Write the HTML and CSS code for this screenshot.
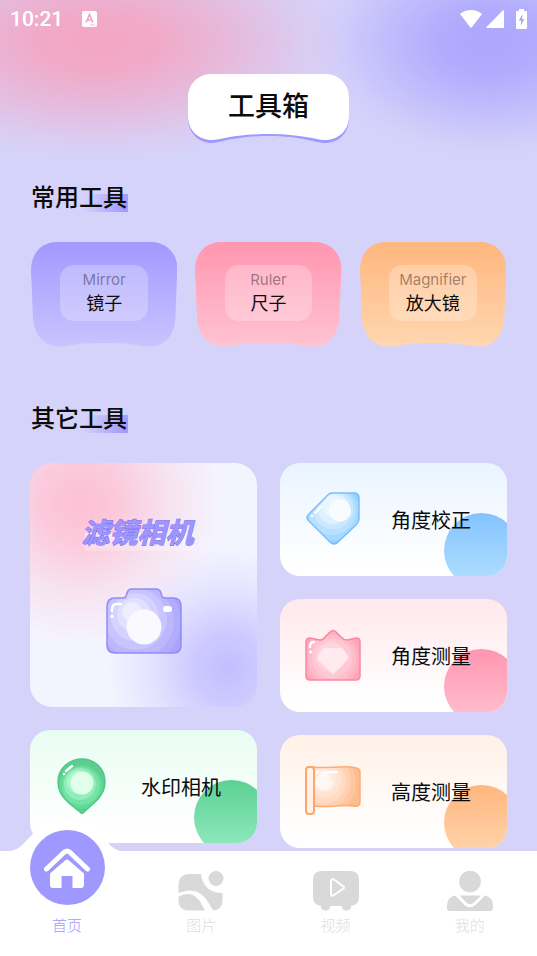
FILE: index.html
```html
<!DOCTYPE html>
<html lang="zh-CN">
<head>
<meta charset="utf-8">
<meta name="viewport" content="width=device-width, initial-scale=1">
<title>工具箱</title>
<link rel="stylesheet" href="styles.css">
</head>
<body>
<svg class="defs" aria-hidden="true">
  <defs>
    <linearGradient id="g-violet" x1="0" y1="0" x2="0" y2="1"><stop offset="0" stop-color="#a199ff"/><stop offset="1" stop-color="#cac4fe"/></linearGradient>
    <linearGradient id="g-pink" x1="0" y1="0" x2="0" y2="1"><stop offset="0" stop-color="#ff96b0"/><stop offset="1" stop-color="#ffc3d2"/></linearGradient>
    <linearGradient id="g-orange" x1="0" y1="0" x2="0" y2="1"><stop offset="0" stop-color="#ffb67e"/><stop offset="1" stop-color="#ffd7b0"/></linearGradient>
    <path id="tile" d="M26 0H120C135 0 147 12 146 28L144 76C143 95 132 104.500 119 104.500C108 104.500 104 101 73 101C42 101 38 104.500 29 104.500C15 104.500 3 95 2 76L0 28C0 12 10 0 26 0Z"/>
  </defs>
</svg>

<header class="status">
  <span class="time">10:21</span>
  <svg class="badge-a" viewBox="0 0 15 16" aria-hidden="true"><rect width="15" height="16" rx="2" fill="#fff"/><path d="M4.200 11.500L7.500 3.500L10.800 11.500M5.500 9H9.500" fill="none" stroke="#efa7c6" stroke-width="1.700"/><path d="M8 14H13" stroke="#efa7c6" stroke-width=".8"/></svg>
  <span class="signals">
    <svg class="wifi" viewBox="0 0 22 18" aria-hidden="true"><path d="M0 4C6-1.300 16-1.300 22 4L12 17Q11 18.500 10 17Z" fill="#fff"/></svg>
    <svg class="cell" viewBox="0 0 18 18" aria-hidden="true"><path d="M18 1V17Q18 18 17 18H1Q-.5 18 .8 16.800L16.500 .8Q18-.4 18 1Z" fill="#fff"/></svg>
    <svg class="battery" viewBox="0 0 11 20" aria-hidden="true"><path d="M3 0H8V2H10Q11 2 11 3V19Q11 20 10 20H1Q0 20 0 19V3Q0 2 1 2H3Z" fill="#fff"/><path d="M6.500 5L2.800 11.500H5.200L4.700 17L8.300 10H6Z" fill="#aaa3fb"/></svg>
  </span>
</header>

<main>
  <div class="title">
    <svg viewBox="0 0 161 69" preserveAspectRatio="none" aria-hidden="true">
      <path d="M24 3H137C151 3 161 12 161 26V44C161 60 150 69 137 69C128 69 114 62 80.500 62C47 62 32 69 24 69C11 69 0 59 0 44V26C0 12 10 3 24 3Z" fill="#a199ff"/>
      <path d="M24 0H137C151 0 161 10 161 24V42C161 57 150 66 137 66C128 66 114 60 80.500 60C47 60 32 66 24 66C11 66 0 57 0 42V24C0 10 10 0 24 0Z" fill="#fff"/>
    </svg>
    <h1>工具箱</h1>
  </div>

  <section>
    <h2>常用工具</h2>
    <div class="common">
      <button class="tile" type="button">
        <svg viewBox="0 0 146 105" preserveAspectRatio="none" aria-hidden="true"><use href="#tile" fill="url(#g-violet)"/></svg>
        <span class="plate"><span class="en">Mirror</span><span class="zh">镜子</span></span>
      </button>
      <button class="tile" type="button">
        <svg viewBox="0 0 146 105" preserveAspectRatio="none" aria-hidden="true"><use href="#tile" fill="url(#g-pink)"/></svg>
        <span class="plate"><span class="en">Ruler</span><span class="zh">尺子</span></span>
      </button>
      <button class="tile" type="button">
        <svg viewBox="0 0 146 105" preserveAspectRatio="none" aria-hidden="true"><use href="#tile" fill="url(#g-orange)"/></svg>
        <span class="plate"><span class="en">Magnifier</span><span class="zh">放大镜</span></span>
      </button>
    </div>
  </section>

  <section>
    <h2>其它工具</h2>
    <div class="others">
      <div class="column">
        <button class="filter" type="button">
          <span class="filter-name">滤镜相机</span>
          <svg class="camera" viewBox="0 0 76 66" aria-hidden="true">
            <defs><clipPath id="c-cam"><path id="cam" d="M9 10H17Q20 10 20.500 7L21 5Q22 1 26 1H50Q54 1 55 5L55.500 7Q56 10 59 10H67Q75 10 75 18V57Q75 65 67 65H9Q1 65 1 57V18Q1 10 9 10Z"/></clipPath></defs>
            <g clip-path="url(#c-cam)">
              <rect width="76" height="66" fill="#a9a3fd"/>
              <circle cx="32" cy="34" r="43" fill="#b2acfd"/><circle cx="31" cy="33" r="37" fill="#bcb7fe"/><circle cx="30" cy="31" r="31" fill="#c8c4fe"/><circle cx="29" cy="29" r="24" fill="#d5d2ff"/><circle cx="28" cy="27" r="17" fill="#e2e0ff"/><circle cx="26" cy="24" r="10" fill="#eeedff"/>
            </g>
            <use href="#cam" fill="none" stroke="#938bf7" stroke-width="1.500"/>
            <circle cx="38" cy="39" r="17.500" fill="#faf9ff"/>
            <rect x="57" y="18" width="9" height="6" rx="3" fill="#fff"/>
            <path d="M6 23V21Q6 16 11 16H15" fill="none" stroke="#fff" stroke-width="2.500" stroke-linecap="round"/><circle cx="6" cy="28.500" r="1.800" fill="#fff"/>
          </svg>
        </button>
        <button class="mini green" type="button">
          <svg viewBox="0 0 54 58" aria-hidden="true">
            <defs><clipPath id="c-pin"><path id="pin" d="M26 1C39 1 49 11 49 24C49 33 45 39 38 45L28 54Q26 56.500 24 54L14 46C6 39 2 33 2 24C2 11 13 1 26 1Z"/></clipPath></defs>
            <g clip-path="url(#c-pin)"><rect width="54" height="58" fill="#5bcd8f"/><circle cx="25" cy="29" r="22" fill="#65d798"/><circle cx="25" cy="28" r="19" fill="#73e3a6"/><circle cx="24" cy="26" r="16" fill="#91edb9"/><circle cx="23" cy="24" r="12" fill="#adf3cb"/></g>
            <use href="#pin" fill="none" stroke="#50c887" stroke-width="1.500"/>
            <circle cx="26" cy="25" r="11.500" fill="#dfffea"/>
            <path d="M10 13L16 8" stroke="#fff" stroke-width="2.500" stroke-linecap="round"/><circle cx="8" cy="16" r="1.300" fill="#fff"/>
          </svg>
          <span>水印相机</span>
        </button>
      </div>
      <div class="column">
        <button class="mini blue" type="button">
          <svg viewBox="0 0 54 58" aria-hidden="true">
            <defs><clipPath id="c-tag"><path id="tag" d="M26 2H48Q53 2 53 7V28Q53 31 50 34L32 51Q28 55 24 51L3 30Q-1 27 3 23L20 6Q23 2 26 2Z"/></clipPath></defs>
            <g clip-path="url(#c-tag)"><rect width="54" height="58" fill="#93cefd"/><circle cx="26" cy="22" r="28" fill="#a7d8fe"/><circle cx="26" cy="20" r="24" fill="#b9e1ff"/><circle cx="27" cy="18" r="20" fill="#cce8ff"/><circle cx="27" cy="17" r="16" fill="#dff0ff"/><circle cx="27" cy="15" r="11" fill="#eaf6ff"/></g>
            <use href="#tag" fill="none" stroke="#78beff" stroke-width="1.500"/>
            <circle cx="34" cy="19.500" r="11" fill="#f8fcff"/>
            <path d="M9 22L15 16" stroke="#fff" stroke-width="2" stroke-linecap="round"/><circle cx="6" cy="25" r="1.200" fill="#fff"/>
          </svg>
          <span>角度校正</span>
        </button>
        <button class="mini pink" type="button">
          <svg viewBox="0 0 54 58" aria-hidden="true">
            <defs><clipPath id="c-crown"><path id="crown" d="M4 11L14 13Q17 13 19 10L24 5Q27 2 30 5L35 10Q38 13 41 13L50 11Q54 11 54 15V49Q54 53 50 53H4Q0 53 0 49V15Q0 11 4 11Z"/></clipPath></defs>
            <g clip-path="url(#c-crown)"><rect width="56" height="58" fill="#ffa5ba"/><circle cx="26" cy="32" r="28" fill="#ffb1c2"/><circle cx="26" cy="32" r="24" fill="#ffbdcb"/><circle cx="26" cy="31" r="20" fill="#ffc8d4"/><circle cx="25" cy="30" r="15" fill="#ffd4dd"/></g>
            <use href="#crown" fill="none" stroke="#fd86a2" stroke-width="1.500"/>
            <path d="M19 21H35Q36 21 37 22L42 29Q43 31 41 33L28 46.500Q27 47.500 26 46.500L12 33Q10 31 12 29L17 22Q18 21 19 21Z" fill="#ffebef"/>
            <path d="M4 20V19Q4 15 8 15" fill="none" stroke="#fff" stroke-width="2.500" stroke-linecap="round"/><circle cx="4.500" cy="25" r="1.400" fill="#fff"/>
          </svg>
          <span>角度测量</span>
        </button>
        <button class="mini orange" type="button">
          <svg viewBox="0 0 54 58" aria-hidden="true">
            <defs><clipPath id="c-flag"><path id="flag" d="M7 4C21 6 31 3 45 4C51 5 54 5 54 9V39C54 43 51 44 47 43C34 41 24 45 7 43Z"/></clipPath></defs>
            <g clip-path="url(#c-flag)"><rect width="56" height="58" fill="#ffbc90"/><circle cx="18" cy="20" r="32" fill="#ffc6a0"/><circle cx="18" cy="19" r="27" fill="#ffd1b1"/><circle cx="18" cy="19" r="22" fill="#ffdbc3"/><circle cx="18" cy="18" r="17" fill="#ffe4d2"/><circle cx="18" cy="17" r="12" fill="#ffecdf"/></g>
            <use href="#flag" fill="none" stroke="#ffab74" stroke-width="1.500"/>
            <rect x="0" y="4" width="8" height="47" rx="3" fill="#fff2e9" stroke="#ffa56b" stroke-width="2"/>
            <circle cx="18" cy="19" r="8.500" fill="#fff7f2"/>
            <path d="M16 9.500C21 10 25 9 31 9" fill="none" stroke="#fff" stroke-width="2.500" stroke-linecap="round"/><circle cx="11.500" cy="9" r="1.500" fill="#fff"/>
          </svg>
          <span>高度测量</span>
        </button>
      </div>
    </div>
  </section>
</main>

<nav class="tabs" aria-label="主导航">
  <a class="tab active" href="#home" aria-current="page">
    <svg class="bump" viewBox="0 0 134 32" aria-hidden="true"><path d="M0 32C21 32 22 24 34 13C52-4 82-4 99 13C110 24 112 32 130 32Z" fill="#fff"/></svg>
    <span class="disc"><svg viewBox="0 0 46 40" aria-hidden="true">
      <path d="M6 25.500L21 12.500Q23 10.500 25 12.500L40 25.500V37Q40 40 37 40H28.500V28H17.500V40H9Q6 40 6 37Z" fill="#fff"/>
      <path d="M2.500 23L20.500 6Q23 4 25.500 6L43.500 23" fill="none" stroke="#9f98ff" stroke-width="7"/>
      <path d="M2.500 21L20.500 4Q23 2 25.500 4L43.500 21" fill="none" stroke="#fff" stroke-width="5" stroke-linecap="round" stroke-linejoin="round"/>
    </svg></span>
    <span class="label">首页</span>
  </a>
  <a class="tab" href="#images">
    <svg class="icon" viewBox="0 0 46 40" aria-hidden="true"><path d="M10 3H23C24 14 31 22 44.500 22V30Q44 39 35 39.500C29 28 23 19 11 19.500Q5 20 .5 22V13Q1 4 10 3Z" fill="#d9d9d9"/><path d="M.5 25.500C12 20 19 24 24 34L27 39.500H10Q1 39 .5 30Z" fill="#d9d9d9"/><circle cx="38" cy="7.500" r="7.500" fill="#d9d9d9"/></svg>
    <span class="label">图片</span>
  </a>
  <a class="tab" href="#videos">
    <svg class="icon" viewBox="0 0 46 40" aria-hidden="true"><path d="M9 0H37Q46 0 46 9V26Q46 34 38 35Q38 39.500 33.500 39.500Q29 39.500 29 35H17Q17 39.500 12.500 39.500Q8 39.500 8 35Q0 34 0 26V9Q0 0 9 0Z" fill="#d9d9d9"/><path d="M18 10.500V23Q18 26 21 24L30.500 17.500Q31.500 16.500 30.500 15.500L21 8.500Q18 7 18 10.500Z" fill="none" stroke="#fff" stroke-width="2"/></svg>
    <span class="label">视频</span>
  </a>
  <a class="tab" href="#me">
    <svg class="icon" viewBox="0 0 46 40" aria-hidden="true"><circle cx="23" cy="10.500" r="10.800" fill="#d9d9d9"/><path d="M13 24.500H34L27 31.500Q23 35 19 31.500Z" fill="#d9d9d9"/><path d="M8 24.500L17.500 34Q23 38.500 28.500 34L38 24.500Q46 26 46 35V37Q46 40 43 40H3Q0 40 0 37V35Q0 26 8 24.500Z" fill="#d9d9d9"/></svg>
    <span class="label">我的</span>
  </a>
</nav>
</body>
</html>
```

FILE: styles.css
```css
* {
  box-sizing: border-box;
}

body {
  margin: 0;
  min-height: 100vh;
  font-family: "Noto Sans CJK SC", sans-serif;
  color: #0b0b0b;
  background:
    radial-gradient(ellipse 250px 118px at 98px 42px, rgba(247, 160, 188, 0.9) 0, rgba(247, 160, 188, 0.8) 25%, rgba(247, 160, 188, 0.48) 55%, rgba(247, 160, 188, 0.15) 82%, rgba(247, 160, 188, 0) 100%) no-repeat,
    radial-gradient(ellipse 180px 116px at calc(100% - 47px) 42px, rgba(171, 165, 254, 0.98) 0, rgba(171, 165, 254, 0.85) 28%, rgba(171, 165, 254, 0.45) 60%, rgba(171, 165, 254, 0.12) 85%, rgba(171, 165, 254, 0) 100%) no-repeat,
    #d6d3fa;
}

button {
  margin: 0;
  padding: 0;
  border: 0;
  background: none;
  color: inherit;
  font: inherit;
  cursor: pointer;
}

h1,
h2 {
  margin: 0;
  font-weight: 500;
}

svg {
  display: block;
}

.defs {
  position: absolute;
  width: 0;
  height: 0;
}

/* Status bar */
.status {
  display: flex;
  align-items: center;
  height: 37px;
  padding: 0 10px;
  color: #fff;
  font-family: Roboto, sans-serif;
  font-size: 21px;
  font-weight: 500;
}

.badge-a {
  width: 15px;
  height: 16px;
  margin-left: 19px;
}

.signals {
  display: flex;
  align-items: center;
  margin-left: auto;
}

.wifi {
  width: 22px;
  height: 18px;
}

.cell {
  width: 18px;
  height: 18px;
  margin: 0 12px 0 4px;
}

.battery {
  width: 11px;
  height: 20px;
}

/* Page title */
.title {
  display: grid;
  place-items: center;
  width: 161px;
  margin: 37px auto 0;
}

.title > * {
  grid-area: 1 / 1;
}

.title svg {
  width: 100%;
  height: 69px;
}

h1 {
  z-index: 1;
  padding-bottom: 8px;
  font-size: 27px;
  line-height: 32px;
}

main {
  padding: 0 30px 106px;
}

h2 {
  position: relative;
  z-index: 0;
  width: max-content;
  margin: 39px 0 32px 1px;
  font-size: 24px;
  line-height: 28px;
}

h2::after {
  content: "";
  position: absolute;
  z-index: -1;
  right: -1px;
  bottom: -2px;
  width: 46px;
  height: 18px;
  background: linear-gradient(100deg, rgba(161, 153, 255, 0) 5%, #a199ff 95%);
}

section + section h2 {
  margin-top: 56px;
}

/* Common tools */
.common {
  display: grid;
  grid-template-columns: repeat(3, 1fr);
  gap: 18px;
  padding: 0 1px;
}

.tile {
  display: grid;
  place-items: center;
}

.tile > * {
  grid-area: 1 / 1;
}

.tile > svg {
  width: 100%;
  height: 105px;
}

.plate {
  z-index: 1;
  display: flex;
  flex-direction: column;
  align-items: center;
  justify-content: center;
  width: 60%;
  height: 56px;
  margin-bottom: 4px;
  padding-bottom: 2px;
  border-radius: 14px;
  background: rgba(255, 255, 255, 0.25);
}

.en {
  color: rgba(0, 0, 0, 0.4);
  font-family: Inter, sans-serif;
  font-size: 15px;
  line-height: 20px;
}

.zh {
  font-size: 18px;
  line-height: 24px;
}

/* Other tools */
.others {
  display: grid;
  grid-template-columns: 1fr 1fr;
  gap: 23px;
}

.column {
  display: flex;
  flex-direction: column;
  gap: 23px;
}

.filter {
  display: flex;
  flex-direction: column;
  align-items: center;
  height: 244px;
  padding-top: 48px;
  border-radius: 22px;
  background:
    radial-gradient(circle 140px at 22% 16%, rgba(255, 182, 203, 0.85) 0, rgba(255, 182, 203, 0.68) 28%, rgba(255, 182, 203, 0.3) 62%, rgba(255, 182, 203, 0) 100%),
    radial-gradient(circle 120px at 87% 84%, rgba(192, 187, 255, 0.95) 0, rgba(192, 187, 255, 0.75) 28%, rgba(192, 187, 255, 0.32) 62%, rgba(192, 187, 255, 0) 100%),
    #f4f4ff;
}

.filter-name {
  margin-right: 12px;
  background: linear-gradient(rgba(255, 255, 255, 0.6), rgba(255, 255, 255, 0)) no-repeat 4px 22px / 100% 26px;
  color: #9d96ff;
  font-size: 28px;
  font-style: italic;
  font-weight: 700;
  line-height: 40px;
  -webkit-text-stroke: 1px #7c70ee;
  paint-order: stroke fill;
}

.camera {
  width: 76px;
  height: 66px;
  margin-top: 37px;
}

.mini {
  position: relative;
  z-index: 0;
  display: flex;
  align-items: center;
  gap: 31px;
  height: 113px;
  padding-left: 26px;
  overflow: hidden;
  border-radius: 20px;
  background: linear-gradient(var(--tint), #fff 90%);
  font-size: 20px;
  line-height: 30px;
}

.mini::after {
  content: "";
  position: absolute;
  z-index: -1;
  right: -12px;
  bottom: -12px;
  width: 75px;
  height: 75px;
  border-radius: 50%;
  background: linear-gradient(var(--dot-top), var(--dot-bottom));
}

.mini svg {
  width: 54px;
  height: 58px;
  overflow: visible;
}

.green {
  --tint: #e8fdf2;
  --dot-top: #5cd193;
  --dot-bottom: #95ebc2;
}

.blue {
  --tint: #e9f4ff;
  --dot-top: #84c3ff;
  --dot-bottom: #b4e1ff;
}

.pink {
  --tint: #ffe8ec;
  --dot-top: #ff96b0;
  --dot-bottom: #ffc3d2;
}

.orange {
  --tint: #fff1e7;
  --dot-top: #ffb67e;
  --dot-bottom: #ffd7b0;
}

/* Bottom tabs */
.tabs {
  position: fixed;
  z-index: 2;
  right: 0;
  bottom: 0;
  left: 0;
  display: grid;
  grid-template-rows: minmax(0, 1fr);
  grid-template-columns: repeat(4, 1fr);
  height: 105px;
  padding-bottom: 20px;
  background: #fff;
}

.tab {
  position: relative;
  display: flex;
  flex-direction: column;
  align-items: center;
  justify-content: flex-end;
  gap: 3px;
  color: #dedede;
  font-size: 15px;
  font-weight: 300;
  line-height: 22px;
  text-decoration: none;
}

.active {
  color: #a199ff;
}

.icon {
  width: 46px;
  height: 40px;
}

.bump {
  position: absolute;
  bottom: 100%;
  left: 0;
  width: 134px;
  height: 32px;
  margin-bottom: -1px;
}

.disc {
  z-index: 1;
  display: grid;
  flex: none;
  place-items: center;
  width: 75px;
  height: 75px;
  margin-bottom: 6px;
  border-radius: 50%;
  background: #9f98ff;
}

.disc svg {
  width: 46px;
  height: 40px;
}
```
